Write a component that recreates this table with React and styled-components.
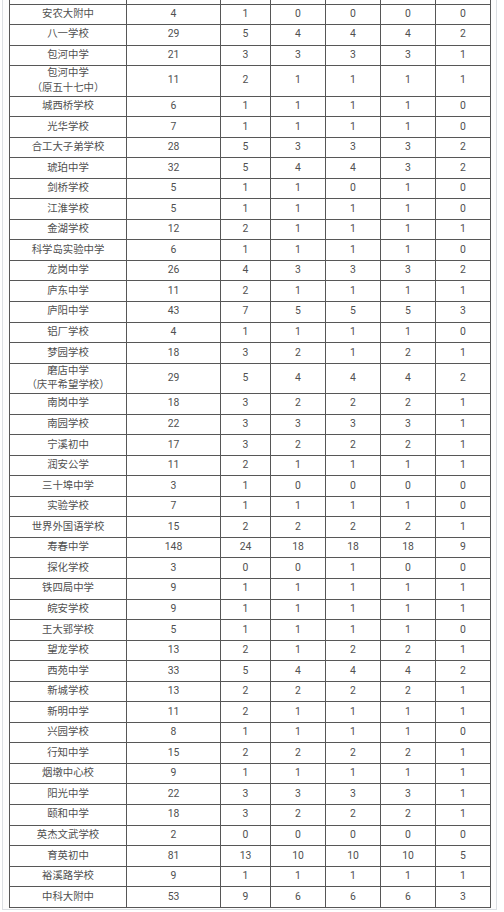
import styled, { createGlobalStyle } from "styled-components";

const GlobalStyle = createGlobalStyle`
  html, body {
    margin: 0;
    padding: 0;
    background: #ffffff;
  }
  body {
    font-family: Roboto, "Noto Sans CJK SC", "Noto Sans", sans-serif;
  }
`;

const Panel = styled.div`
  margin: 0 7px 0 2px;
  padding: 0 6px 1px 6px;
  border: 1px solid #dcdfe3;
  border-top: none;
  overflow: hidden;
  background: #fdfdfd;
`;

const Table = styled.table`
  width: 481px;
  border-collapse: collapse;
  table-layout: fixed;
  background: #ffffff;
`;

const Col = styled.col`
  width: ${(p) => p.$w}px;
`;

/* the row above 安农大附中 is scrolled out of view: only its lower edge shows */
const StripRow = styled.tr`
  height: 4px;
`;

const Row = styled.tr`
  height: 20.55px;
`;

const Cell = styled.td`
  border: 1px solid #575757;
  padding: 0;
  text-align: center;
  vertical-align: middle;
  font-size: 10.4px;
  line-height: 14.7px;
  color: #505050;
  white-space: pre-line;
`;

const StripCell = styled.td`
  border: 1px solid #575757;
  border-top: none;
  padding: 0;
`;

const widths = [117, 94, 50, 55, 55, 55, 55];

const rows = [
  ["安农大附中", 4, 1, 0, 0, 0, 0],
  ["八一学校", 29, 5, 4, 4, 4, 2],
  ["包河中学", 21, 3, 3, 3, 3, 1],
  ["包河中学\n（原五十七中）", 11, 2, 1, 1, 1, 1],
  ["城西桥学校", 6, 1, 1, 1, 1, 0],
  ["光华学校", 7, 1, 1, 1, 1, 0],
  ["合工大子弟学校", 28, 5, 3, 3, 3, 2],
  ["琥珀中学", 32, 5, 4, 4, 3, 2],
  ["剑桥学校", 5, 1, 1, 0, 1, 0],
  ["江淮学校", 5, 1, 1, 1, 1, 0],
  ["金湖学校", 12, 2, 1, 1, 1, 1],
  ["科学岛实验中学", 6, 1, 1, 1, 1, 0],
  ["龙岗中学", 26, 4, 3, 3, 3, 2],
  ["庐东中学", 11, 2, 1, 1, 1, 1],
  ["庐阳中学", 43, 7, 5, 5, 5, 3],
  ["铝厂学校", 4, 1, 1, 1, 1, 0],
  ["梦园学校", 18, 3, 2, 1, 2, 1],
  ["磨店中学\n（庆平希望学校）", 29, 5, 4, 4, 4, 2],
  ["南岗中学", 18, 3, 2, 2, 2, 1],
  ["南园学校", 22, 3, 3, 3, 3, 1],
  ["宁溪初中", 17, 3, 2, 2, 2, 1],
  ["润安公学", 11, 2, 1, 1, 1, 1],
  ["三十埠中学", 3, 1, 0, 0, 0, 0],
  ["实验学校", 7, 1, 1, 1, 1, 0],
  ["世界外国语学校", 15, 2, 2, 2, 2, 1],
  ["寿春中学", 148, 24, 18, 18, 18, 9],
  ["探化学校", 3, 0, 0, 1, 0, 0],
  ["铁四局中学", 9, 1, 1, 1, 1, 1],
  ["皖安学校", 9, 1, 1, 1, 1, 1],
  ["王大郢学校", 5, 1, 1, 1, 1, 0],
  ["望龙学校", 13, 2, 1, 2, 2, 1],
  ["西苑中学", 33, 5, 4, 4, 4, 2],
  ["新城学校", 13, 2, 2, 2, 2, 1],
  ["新明中学", 11, 2, 1, 1, 1, 1],
  ["兴园学校", 8, 1, 1, 1, 1, 0],
  ["行知中学", 15, 2, 2, 2, 2, 1],
  ["烟墩中心校", 9, 1, 1, 1, 1, 1],
  ["阳光中学", 22, 3, 3, 3, 3, 1],
  ["颐和中学", 18, 3, 2, 2, 2, 1],
  ["英杰文武学校", 2, 0, 0, 0, 0, 0],
  ["育英初中", 81, 13, 10, 10, 10, 5],
  ["裕溪路学校", 9, 1, 1, 1, 1, 1],
  ["中科大附中", 53, 9, 6, 6, 6, 3],
];

export default function App() {
  return (
    <>
      <GlobalStyle />
      <Panel>
        <Table>
          <colgroup>
            {widths.map((w, i) => (
              <Col key={i} $w={w} />
            ))}
          </colgroup>
          <tbody>
            <StripRow>
              {widths.map((w, i) => (
                <StripCell key={i} />
              ))}
            </StripRow>
            {rows.map((r) => (
              <Row key={r[0]}>
                {r.map((v, i) => (
                  <Cell key={i}>{v}</Cell>
                ))}
              </Row>
            ))}
          </tbody>
        </Table>
      </Panel>
    </>
  );
}
